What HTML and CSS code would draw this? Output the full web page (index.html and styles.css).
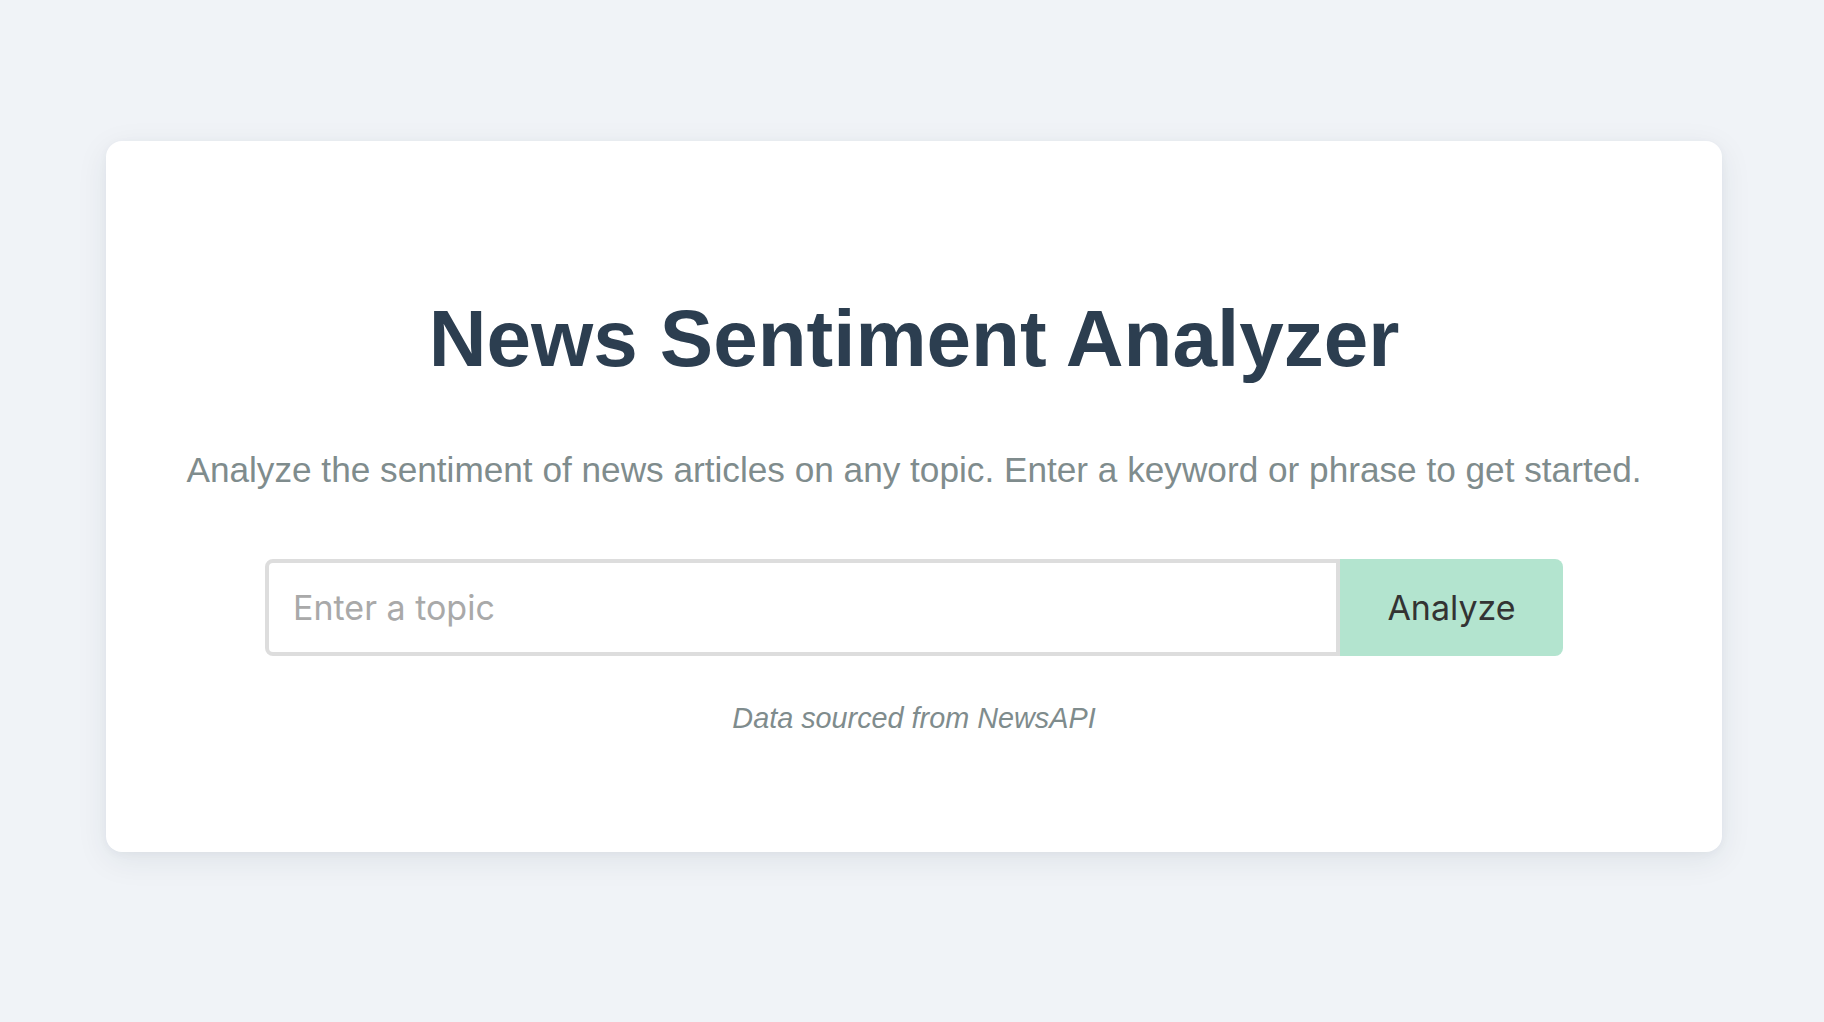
FILE: index.html
```html
<!DOCTYPE html>
<html lang="en">
<head>
<meta charset="utf-8">
<title>News Sentiment Analyzer</title>
<link rel="stylesheet" href="styles.css">
</head>
<body>
  <main class="card">
    <h1 class="title">News Sentiment Analyzer</h1>
    <p class="subtitle">Analyze the sentiment of news articles on any topic. Enter a keyword or phrase to get started.</p>
    <form class="search">
      <input class="search-input" type="text" placeholder="Enter a topic">
      <button class="search-button" type="button">Analyze</button>
    </form>
    <p class="source">Data sourced from NewsAPI</p>
  </main>
</body>
</html>
```

FILE: styles.css
```css
html, body {
  margin: 0;
  padding: 0;
}

body {
  background: #f0f3f7;
  font-family: "Liberation Sans", Arial, sans-serif;
  padding: 141px 102px 0 106px;
  min-height: 1022px;
  box-sizing: border-box;
}

.card {
  background: #ffffff;
  border-radius: 16px;
  box-shadow: 0 8px 32px rgba(30, 45, 70, 0.08), 0 2px 8px rgba(30, 45, 70, 0.04);
  width: 1616px;
  box-sizing: border-box;
  padding: 150px 40px 111px;
  text-align: center;
}

.title {
  margin: 0;
  font-size: 80px;
  line-height: 96px;
  font-weight: 700;
  color: #2c3e50;
}

.subtitle {
  margin: 55px 0 0;
  font-size: 35.2px;
  line-height: 56px;
  color: #7f8c8d;
}

.search {
  margin: 61px auto 0;
  width: 1298px;
  display: flex;
}

.search-input {
  flex: 1;
  height: 97px;
  box-sizing: border-box;
  border: 4px solid #dddddd;
  border-radius: 8px 0 0 8px;
  padding: 0 24px;
  font-family: Inter, "Noto Sans", sans-serif;
  font-size: 34px;
  color: #333333;
  outline: none;
  margin: 0;
}

.search-input::placeholder {
  color: #a9a9a9;
}

.search-button {
  width: 223px;
  height: 97px;
  border: none;
  border-radius: 0 8px 8px 0;
  background: #b3e4cf;
  color: #333333;
  font-family: Inter, "Noto Sans", sans-serif;
  font-size: 34px;
  padding: 0;
  margin: 0;
}

.source {
  margin: 39px 0 0;
  font-size: 28.8px;
  line-height: 46px;
  font-style: italic;
  color: #7f8c8d;
}
```
